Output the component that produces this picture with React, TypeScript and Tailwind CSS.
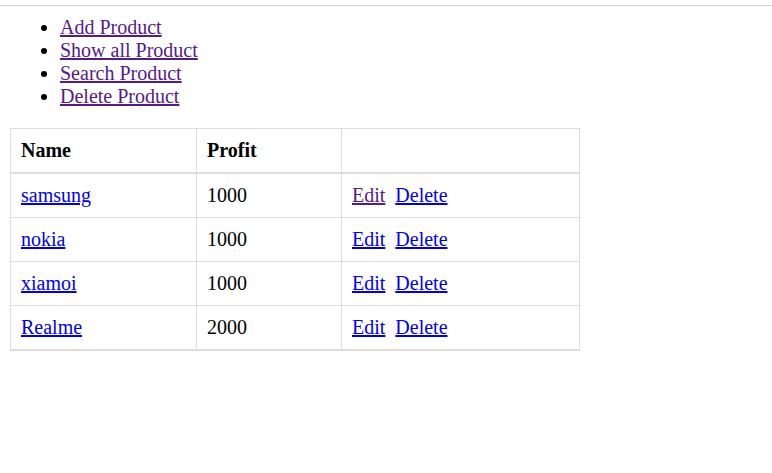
const links = ["Add Product", "Show all Product", "Search Product", "Delete Product"];

const products = [
    { name: "samsung", profit: 1000, editVisited: true },
    { name: "nokia", profit: 1000, editVisited: false },
    { name: "xiamoi", profit: 1000, editVisited: false },
    { name: "Realme", profit: 2000, editVisited: false },
];

export default function App() {
    return <div className="min-h-[473px] bg-white text-black text-[20px] leading-[23px]" style={{ fontFamily: '"Liberation Serif", "Times New Roman", serif' }}>
        <div className="h-[5px]" />
        <div className="border-t border-[#d0d0d0]" />
        <ul className="list-disc pl-[60px] mt-[10px]">
            {links.map((l) => (
                <li key={l}>
                    <a href="#" className="underline text-[#551a8b]">{l}</a>
                </li>
            ))}
        </ul>
        <section className="ml-[10px] mt-[20px]">
            <table className="w-[570px] table-fixed border-collapse border border-b-2 border-[#dddddd]">
                <thead>
                    <tr>
                        <th className="w-[186px] p-[10px] text-left font-bold border border-b-2 border-[#dddddd]">Name</th>
                        <th className="w-[145px] p-[10px] text-left font-bold border border-b-2 border-[#dddddd]">Profit</th>
                        <th className="p-[10px] border border-b-2 border-[#dddddd]"></th>
                    </tr>
                </thead>
                <tbody>
                    {products.map((p) => (
                        <tr key={p.name}>
                            <td className="p-[10px] border border-[#dddddd]">
                                <a href="#" className="underline text-[#0000ee]">{p.name}</a>
                            </td>
                            <td className="p-[10px] border border-[#dddddd]">{p.profit}</td>
                            <td className="p-[10px] border border-[#dddddd]">
                                <span className="flex gap-[10px]">
                                    <a href="#" className={"underline " + (p.editVisited ? "text-[#551a8b]" : "text-[#0000ee]")}>Edit</a>
                                    <a href="#" className="underline text-[#0000ee]">Delete</a>
                                </span>
                            </td>
                        </tr>
                    ))}
                </tbody>
            </table>
        </section>
    </div>
}
